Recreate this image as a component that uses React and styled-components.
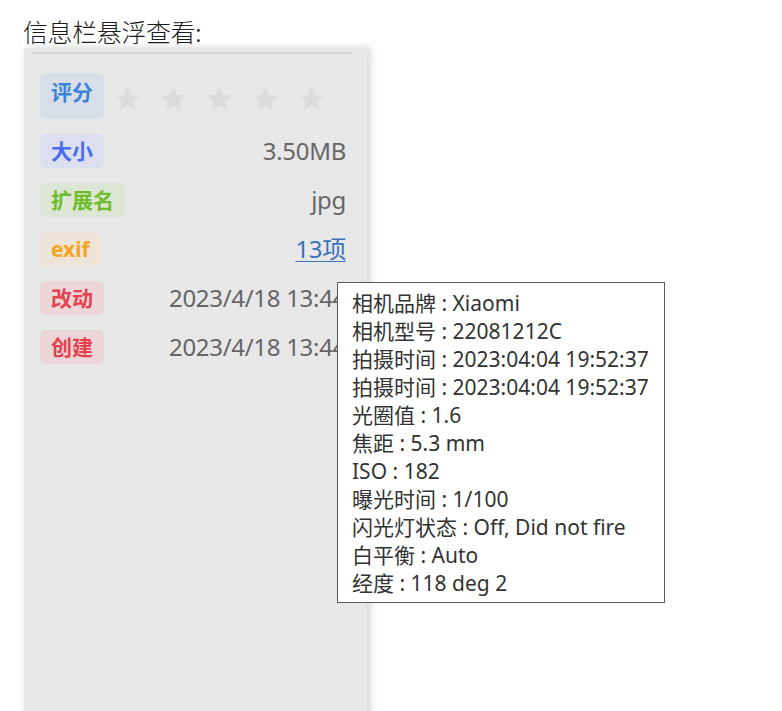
import React from 'react'
import styled, { createGlobalStyle } from 'styled-components'

const GlobalStyle = createGlobalStyle`
  html, body {
    margin: 0;
    padding: 0;
    background: #fff;
  }
  body {
    font-family: "Noto Sans", "Noto Sans CJK SC", sans-serif;
    overflow: hidden;
  }
`

const Page = styled.div`
  position: relative;
  width: 782px;
  height: 711px;
  padding: 14px 0 0 23px;
  box-sizing: border-box;
  overflow: hidden;
`

const Title = styled.div`
  font-family: "Noto Sans CJK SC", sans-serif;
  font-size: 25px;
  font-weight: 300;
  line-height: 34px;
  color: #1c1c1c;
  letter-spacing: -0.4px;
`

const Panel = styled.div`
  margin-left: 1px;
  width: 343px;
  height: 680px;
  background: #e8e8e8;
  box-shadow: 3px 0 8px rgba(0, 0, 0, 0.18);
  padding: 4px 21px 0 16px;
  box-sizing: border-box;
`

const Divider = styled.div`
  height: 2px;
  background: #d6d6d6;
  margin: 0 -6px 19px -8px;
`

const List = styled.div`
  display: flex;
  flex-direction: column;
  gap: 15px;
`

const Row = styled.div`
  display: flex;
  align-items: ${p => (p.$top ? 'flex-start' : 'center')};
  justify-content: space-between;
  gap: 10px;
`

const Tag = styled.span`
  flex: none;
  display: inline-block;
  height: ${p => (p.$tall ? 46 : 34)}px;
  line-height: ${p => (p.$tall ? 38 : 34)}px;
  padding: 0 11px;
  box-sizing: border-box;
  border-radius: 6px;
  font-family: "Noto Sans", "Noto Sans CJK SC", sans-serif;
  font-weight: 700;
  font-size: 21px;
  color: ${p => p.$fg};
  background: ${p => p.$bg};
`

const Value = styled.span`
  font-family: "Noto Sans", "Noto Sans CJK SC", sans-serif;
  font-size: 24px;
  line-height: 34px;
  color: #666;
  white-space: nowrap;
  letter-spacing: -0.3px;
`

const Link = styled(Value)`
  color: #3a72bd;
  text-decoration: underline;
  text-underline-offset: 3px;
  text-decoration-thickness: 1px;
`

const Stars = styled.div`
  flex: 1;
  display: flex;
  gap: 19px;
  padding-top: 13px;
`

const Tooltip = styled.div`
  position: absolute;
  left: 337px;
  top: 282px;
  width: 328px;
  height: 321px;
  box-sizing: border-box;
  background: #fff;
  border: 1px solid #5a5a5a;
  padding: 6px 8px 0 14px;
  font-family: "Noto Sans", "Noto Sans CJK SC", sans-serif;
  font-size: 21px;
  line-height: 28px;
  color: #333;
`

const Line = styled.div`
  white-space: nowrap;
`

const Star = () => (
  <svg width="27" height="26" viewBox="0 0 24 23">
    <path
      d="M12 0.8l3.3 7.1 7.7 0.8-5.8 5.2 1.7 7.6L12 17.6 5.1 21.5l1.7-7.6L1 8.7l7.7-0.8z"
      fill="#dcdcdc"
    />
  </svg>
)

const tags = [
  { label: '大小', fg: '#4a6cf0', bg: '#dcdff0', value: '3.50MB' },
  { label: '扩展名', fg: '#6fbd2b', bg: '#dde6d5', value: 'jpg' },
  { label: 'exif', fg: '#f5a323', bg: '#eee4d7', value: '13项', link: true },
  { label: '改动', fg: '#e2434f', bg: '#ecd6d9', value: '2023/4/18 13:44' },
  { label: '创建', fg: '#e2434f', bg: '#ecd6d9', value: '2023/4/18 13:44' },
]

const exif = [
  ['相机品牌', 'Xiaomi'],
  ['相机型号', '22081212C'],
  ['拍摄时间', '2023:04:04 19:52:37'],
  ['拍摄时间', '2023:04:04 19:52:37'],
  ['光圈值', '1.6'],
  ['焦距', '5.3 mm'],
  ['ISO', '182'],
  ['曝光时间', '1/100'],
  ['闪光灯状态', 'Off, Did not fire'],
  ['白平衡', 'Auto'],
  ['经度', '118 deg 2'],
]

export default function App() {
  return (
    <Page>
      <GlobalStyle />
      <Title>信息栏悬浮查看:</Title>
      <Panel>
        <Divider />
        <List>
          <Row $top>
            <Tag $tall $fg="#3d84d6" $bg="#d8dfe9">评分</Tag>
            <Stars>
              {[0, 1, 2, 3, 4].map(i => <Star key={i} />)}
            </Stars>
          </Row>
          {tags.map((t, i) => (
            <Row key={i}>
              <Tag $fg={t.fg} $bg={t.bg}>{t.label}</Tag>
              {t.link ? <Link>{t.value}</Link> : <Value>{t.value}</Value>}
            </Row>
          ))}
        </List>
      </Panel>
      <Tooltip>
        {exif.map(([k, v], i) => (
          <Line key={i}>{k} : {v}</Line>
        ))}
      </Tooltip>
    </Page>
  )
}
